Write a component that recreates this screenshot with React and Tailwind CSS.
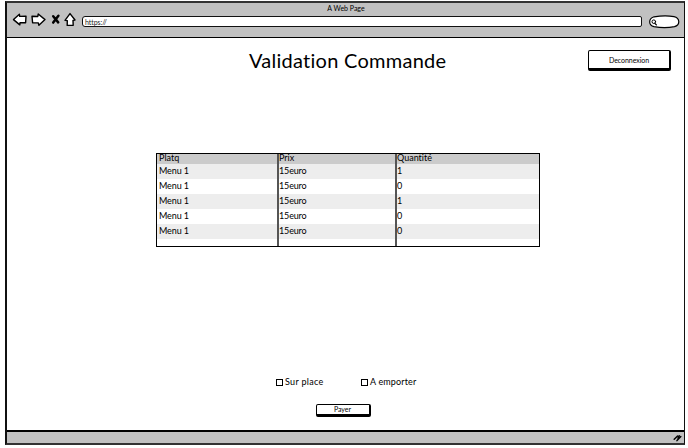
const rows = [
  ['Menu 1', '15euro', '1'],
  ['Menu 1', '15euro', '0'],
  ['Menu 1', '15euro', '1'],
  ['Menu 1', '15euro', '0'],
  ['Menu 1', '15euro', '0'],
];

function NavIcons() {
  return (
    <svg width="66" height="16" viewBox="12 12 66 16" fill="white" stroke="black" strokeWidth="1.4" strokeLinejoin="round" strokeLinecap="round">
      <path d="M13.5 19.6 19.4 14.3 19.7 16.4 26 16.1 25.6 22.8 20 22.8 19.8 24.9Z" />
      <path d="M32 16.2 37.8 16.5 38.2 14 45 19.6 38.9 25.2 38.3 22.9 32.6 22.7Z" />
      <path d="M53.2 16.3 58.2 22.4M58.4 15.8 53.2 22.6" fill="none" strokeWidth="2.5" />
      <path d="M70 13.6 75 20 73 20.4 73.2 25.3 67.2 25.4 67.3 20.6 65 20.3Z" />
    </svg>
  );
}

function SearchBox() {
  return (
    <svg width="32" height="14" viewBox="648 14.5 32 14" fill="white" stroke="black" strokeLinecap="round">
      <path d="M654 16.3C660 15.4 669 15.3 674 16.1 680 17.4 680.5 24.5 674.5 26.2 668 27.3 659 27 654 26.2 648.3 24.7 648.2 18.4 654 16.3Z" strokeWidth="1.2" />
      <circle cx="653.8" cy="21.2" r="1.8" strokeWidth="1" />
      <path d="M655 23 656.4 24.4" strokeWidth="1.2" />
    </svg>
  );
}

function Checkbox({ label, className }) {
  return (
    <div className={'flex items-center gap-[2px] ' + className}>
      <span className="size-[7px] shrink-0 border border-black bg-white" />
      {label}
    </div>
  );
}

export default function App() {
  return (
    <div className="h-[448px] w-[688px] overflow-hidden bg-white pt-px pl-[5px] font-['Lato','Liberation_Sans',sans-serif] text-black [font-variant-ligatures:none]">
      <div className="flex h-[444px] w-[680px] flex-col border-2 border-r-[1.5px] border-[#111] border-t-[#333] border-b-[#333]">
        <header className="h-[35px] shrink-0 border-b border-black bg-[#c1c1c1]">
          <div className="h-[8px] pl-px text-center text-[7px] leading-[10px]">A Web Page</div>
          <div className="flex h-[17px] items-center pl-[5px]">
            <NavIcons />
            <div className="ml-[4px] mt-[4px] flex h-[11px] w-[560px] items-center rounded-l-[3px] rounded-r-[2px] border border-[#111] bg-white pl-[2px] text-[7px] leading-[8px] tracking-[-0.05px] text-[#222]">
              https://
            </div>
            <div className="ml-[6px] mt-[4px]"><SearchBox /></div>
          </div>
        </header>

        <main className="flex min-h-0 flex-1 flex-col items-center">
          <div className="flex h-[115px] w-full shrink-0 items-start">
            <h1 className="ml-[242px] mt-[10px] w-[199px] whitespace-nowrap text-[20px] leading-[25px] tracking-[0.26px]">Validation Commande</h1>
            <button className="ml-[140px] mt-[12px] h-[21px] w-[83px] rounded-[2px] border border-r-2 border-b-[3px] border-black bg-white text-[7px] leading-[10px] tracking-[-0.05px]">
              Deconnexion
            </button>
          </div>

          <div className="ml-[5px] h-[94px] w-[384px] shrink-0 border border-black text-[9px]">
            <div className="flex h-full flex-col bg-[linear-gradient(#555,#555),linear-gradient(#555,#555)] bg-[length:2px_100%,2px_100%] bg-[position:120px_0,238px_0] bg-no-repeat">
              <div className="grid h-[10px] grid-cols-[120px_118px_1fr] leading-[7px]">
                <span className="bg-[#cbcbcb] pl-[2px]">Platq</span>
                <span className="ml-[2px] bg-[#cbcbcb]">Prix</span>
                <span className="ml-[2px] bg-[#cbcbcb]">Quantité</span>
              </div>
              {rows.map((r, i) => (
                <div key={i} className={'grid h-[15px] grid-cols-[120px_118px_1fr] leading-[13px] ' + (i % 2 === 0 ? '*:bg-[#ededed]' : '')}>
                  <span className="pl-[2px] tracking-[-0.1px]">{r[0]}</span>
                  <span className="ml-[2px] tracking-[-0.15px]">{r[1]}</span>
                  <span className="ml-[2px]">{r[2]}</span>
                </div>
              ))}
            </div>
          </div>

          <div className="mt-[128px] flex w-full text-[9px] leading-[14px]">
            <Checkbox label="Sur place" className="ml-[269px] w-[85px] tracking-[0.3px]" />
            <Checkbox label="A emporter" className="tracking-[0.15px]" />
          </div>
          <button className="mt-[15px] mr-[5px] h-[13px] w-[55px] rounded-[2px] border border-r-2 border-b-[3px] border-black bg-white text-[7px] leading-[9px]">
            Payer
          </button>
        </main>

        <footer className="flex h-[13px] shrink-0 items-center justify-end border-t-2 border-black bg-[#c1c1c1] pr-[2px]">
          <svg width="9" height="8" viewBox="0 0 9 8" stroke="black" strokeWidth="1.5" strokeLinecap="round">
            <path d="M1.2 5.3 4.6 2M4 6.6 7.8 2.6M5 4.3 6.2 1.8" fill="none" />
          </svg>
        </footer>
      </div>
    </div>
  );
}
